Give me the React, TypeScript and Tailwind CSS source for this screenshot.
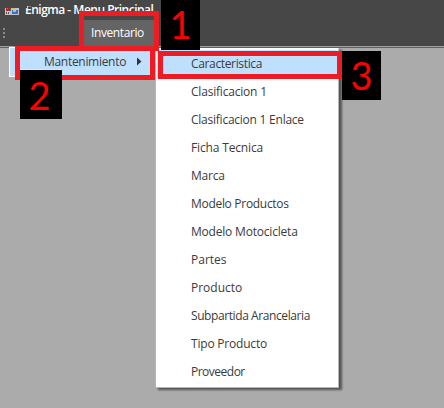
const items = [
  { label: 'Caracteristica', tracking: 'tracking-[-0.35px]' },
  { label: 'Clasificacion 1', tracking: 'tracking-[-0.2px]' },
  { label: 'Clasificacion 1 Enlace', tracking: 'tracking-[-0.24px]' },
  { label: 'Ficha Tecnica', tracking: 'tracking-[-0.15px]' },
  { label: 'Marca', tracking: 'tracking-[-0.2px]' },
  { label: 'Modelo Productos', tracking: 'tracking-[-0.3px]' },
  { label: 'Modelo Motocicleta', tracking: 'tracking-[-0.2px]' },
  { label: 'Partes', tracking: '' },
  { label: 'Producto', tracking: '' },
  { label: 'Subpartida Arancelaria', tracking: 'tracking-[-0.41px]' },
  { label: 'Tipo Producto', tracking: 'tracking-[-0.2px]' },
  { label: 'Proveedor', tracking: 'tracking-[-0.5px]' },
];

function AppIcon() {
  return (
    <svg className="mt-[8px]" width="14" height="7" viewBox="0 0 14 7" shapeRendering="crispEdges">
      <path fill="#c4c4c4" d="M0 0h14v7H0z" />
      <path fill="#a92a2c" d="M1 0h4v3H1z" />
      <path fill="#e85858" d="M2 0h1v1H2z" />
      <path fill="#555" d="M5 0h1v3H5zM1 4h1v2H1zM3 4h1v2H3z" />
      <path fill="#deb64b" d="M7 0h3v1H7z" />
      <path fill="#376fcb" d="M7 2h6v4H7z" />
      <path fill="#8dc2ff" d="M8 2h3v2H8z" />
    </svg>
  );
}

export default function App() {
  return (
    <div className="relative h-[408px] w-[444px] overflow-hidden whitespace-nowrap bg-[#ababab] font-['Open_Sans','Noto_Sans',sans-serif] text-[12px] text-[#3b3b3b]">
      <header className="h-[48px] border-b border-[#626262] bg-[#474747] text-white">
        <div className="flex h-[20px] items-start gap-[6px] pl-[5px]">
          <AppIcon />
          <span className="relative font-semibold leading-[19px] tracking-[-0.5px]">
            Enigma - Menu Principal
            <i className="absolute left-0 top-0 h-[6px] w-[7px] bg-[#474747]" />
            <i className="absolute left-0 top-0 h-[8px] w-[2px] bg-[#474747]" />
          </span>
        </div>
        <nav className="flex h-[27px] border-b border-[#a0a0a0]">
          <span className="flex w-[84px] flex-col gap-[2px] pl-[3px] pt-[8px]">
            <i className="size-[2px] bg-[#8b8b8b]" />
            <i className="size-[2px] bg-[#8b8b8b]" />
            <i className="size-[2px] bg-[#8b8b8b]" />
          </span>
          <span className="w-[70px] bg-[#646464] pl-[7px] leading-[25px] tracking-[-0.4px]">Inventario</span>
        </nav>
      </header>

      <main className="flex items-start pl-[9px]">
        <div className="-mt-px flex h-[30px] w-[146px] items-start border border-white bg-[#bfdfff] pl-[34px] leading-[27px]">
          <span className="w-[93px] tracking-[-0.3px]">Mantenimiento</span>
          <svg className="mt-[9px]" width="5" height="9" viewBox="0 0 5 9"><path fill="#333" d="M0 0.5 4.5 4.5 0 8.5z" /></svg>
        </div>
        <ul className="h-[340px] w-[184px] border border-[#b5b5b5] border-t-white bg-white px-px pt-px leading-[27px] shadow-[3px_2px_2px_#555]">
          {items.map((item) => (
            <li key={item.label} className="h-[28px] pl-[34px] first:bg-[#bfdfff]">
              <span className={item.tracking}>{item.label}</span>
            </li>
          ))}
        </ul>
      </main>

      <div className="absolute left-[79px] top-[11px] h-[40px] w-[80px] border-[5px] border-[#ed1c24]">
        <div className="h-[4px] bg-[#474747]" />
      </div>
      <div className="absolute left-[15px] top-[46px] h-[34px] w-[140px] border-[5px] border-[#ed1c24]" />
      <div className="absolute left-[158px] top-[51px] h-[28px] w-[184px] border-[5px] border-[#ed1c24]" />

      <div className="absolute left-[161px] top-0 h-[50px] w-[39px] bg-black text-center font-['Lato',sans-serif] text-[38px] leading-[49px] text-[#ff0000]">1</div>
      <div className="absolute left-[20px] top-[69px] h-[50px] w-[42px] border-t border-[#d9e9f7] bg-black pr-[3px] text-center font-['Lato',sans-serif] text-[38px] leading-[50px] text-[#ff0000]">2</div>
      <div className="absolute left-[342px] top-[51px] h-[49px] w-[39px] bg-black text-center font-['Lato',sans-serif] text-[38px] leading-[48px] text-[#ff0000]">3</div>
    </div>
  );
}
